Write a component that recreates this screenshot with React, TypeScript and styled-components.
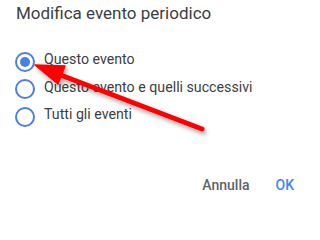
import styled, { createGlobalStyle } from 'styled-components';

//
//Page reset
const GlobalStyle = createGlobalStyle`
    html, body {
        margin: 0;
        padding: 0;
        background: #ffffff;
    }
    body {
        font-family: Roboto, "Noto Sans", Arial, sans-serif;
    }
`;

const Dialog = styled.div`
    position: relative;
    width: 306px;
    height: 203px;
    background: #ffffff;
    padding: 3px 0 0 0;
    box-sizing: border-box;
    display: flex;
    flex-direction: column;
    overflow: hidden;
`;

const Title = styled.div`
    font-size: 17px;
    line-height: 20px;
    color: #3c4043;
    padding-left: 16px;
`;

const Options = styled.div`
    display: flex;
    flex-direction: column;
    margin-top: 25px;
`;

const Option = styled.label`
    display: flex;
    align-items: center;
    gap: 9px;
    height: 27.5px;
    padding-left: 15px;
    font-size: 14.2px;
    color: #3c4043;
`;

const Radio = styled.span<{ $checked?: boolean }>`
    width: 20px;
    height: 20px;
    border: 2px solid #4a7fe6;
    border-radius: 50%;
    box-sizing: border-box;
    display: flex;
    align-items: center;
    justify-content: center;
    flex-shrink: 0;
    &::after {
        content: '';
        width: 10px;
        height: 10px;
        border-radius: 50%;
        background: #4a7fe6;
        display: ${(p) => (p.$checked ? 'block' : 'none')};
    }
`;

const Label = styled.span`
    margin-top: -5px;
`;

const Actions = styled.div`
    margin-top: auto;
    display: flex;
    justify-content: flex-end;
    align-items: center;
    gap: 26px;
    padding: 0 12px 8px 0;
`;

const Button = styled.button<{ $primary?: boolean }>`
    background: none;
    border: none;
    padding: 0;
    font-family: Roboto, "Noto Sans", Arial, sans-serif;
    font-size: 14px;
    font-weight: 500;
    line-height: 20px;
    color: ${(p) => (p.$primary ? '#4285f4' : '#5f6368')};
    cursor: pointer;
`;

//
//Red annotation arrow lying over the dialog
const Overlay = styled.svg`
    position: absolute;
    left: 0;
    top: 0;
    pointer-events: none;
`;

const options = ['Questo evento', 'Questo evento e quelli successivi', 'Tutti gli eventi'];

const App = () => {
    return (
        <>
            <GlobalStyle />
            <Dialog>
                <Title>Modifica evento periodico</Title>
                <Options>
                    {options.map((text, i) => (
                        <Option key={text}>
                            <Radio $checked={i === 0} />
                            <Label>{text}</Label>
                        </Option>
                    ))}
                </Options>
                <Actions>
                    <Button>Annulla</Button>
                    <Button $primary>OK</Button>
                </Actions>
                <Overlay width="306" height="203" viewBox="0 0 306 203">
                    <defs>
                        <filter id="shadow" x="-20%" y="-20%" width="140%" height="160%">
                            <feDropShadow dx="2" dy="3" stdDeviation="2" floodColor="#000" floodOpacity="0.35" />
                        </filter>
                    </defs>
                    <g filter="url(#shadow)">
                        <line x1="202" y1="129" x2="58" y2="74" stroke="#ff0000" strokeWidth="5" strokeLinecap="round" />
                        <polygon points="35,65 65,66 58,84" fill="#ff0000" stroke="#ff0000" strokeWidth="1.5" strokeLinejoin="round" />
                    </g>
                </Overlay>
            </Dialog>
        </>
    );
};

export default App;
